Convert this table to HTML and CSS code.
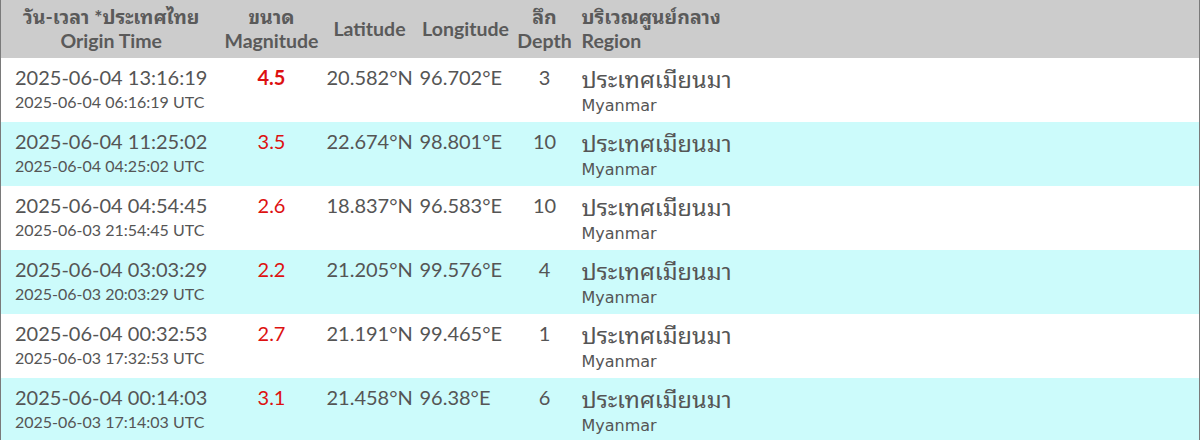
FILE: index.html
```html
<!DOCTYPE html>
<html lang="th">
<head>
<meta charset="utf-8">
<link rel="stylesheet" href="styles.css">
</head>
<body>
<table class="quakes">
  <colgroup>
    <col class="c-time"><col class="c-mag"><col class="c-lat"><col class="c-lon"><col class="c-dep"><col class="c-reg">
  </colgroup>
  <thead>
    <tr>
      <th class="h-center">วัน-เวลา *ประเทศไทย<br>Origin Time</th>
      <th class="h-center">ขนาด<br>Magnitude</th>
      <th class="h-center">Latitude</th>
      <th class="h-center">Longitude</th>
      <th class="h-center">ลึก<br>Depth</th>
      <th class="h-left">บริเวณศูนย์กลาง<br>Region</th>
    </tr>
  </thead>
  <tbody>
    <tr>
      <td class="time"><div class="main">2025-06-04 13:16:19</div><div class="sub">2025-06-04 06:16:19 UTC</div></td>
      <td class="mag strong">4.5</td>
      <td class="lat">20.582°N</td>
      <td class="lon">96.702°E</td>
      <td class="dep">3</td>
      <td class="reg"><div class="th">ประเทศเมียนมา</div><div class="en">Myanmar</div></td>
    </tr>
    <tr class="alt">
      <td class="time"><div class="main">2025-06-04 11:25:02</div><div class="sub">2025-06-04 04:25:02 UTC</div></td>
      <td class="mag">3.5</td>
      <td class="lat">22.674°N</td>
      <td class="lon">98.801°E</td>
      <td class="dep">10</td>
      <td class="reg"><div class="th">ประเทศเมียนมา</div><div class="en">Myanmar</div></td>
    </tr>
    <tr>
      <td class="time"><div class="main">2025-06-04 04:54:45</div><div class="sub">2025-06-03 21:54:45 UTC</div></td>
      <td class="mag">2.6</td>
      <td class="lat">18.837°N</td>
      <td class="lon">96.583°E</td>
      <td class="dep">10</td>
      <td class="reg"><div class="th">ประเทศเมียนมา</div><div class="en">Myanmar</div></td>
    </tr>
    <tr class="alt">
      <td class="time"><div class="main">2025-06-04 03:03:29</div><div class="sub">2025-06-03 20:03:29 UTC</div></td>
      <td class="mag">2.2</td>
      <td class="lat">21.205°N</td>
      <td class="lon">99.576°E</td>
      <td class="dep">4</td>
      <td class="reg"><div class="th">ประเทศเมียนมา</div><div class="en">Myanmar</div></td>
    </tr>
    <tr>
      <td class="time"><div class="main">2025-06-04 00:32:53</div><div class="sub">2025-06-03 17:32:53 UTC</div></td>
      <td class="mag">2.7</td>
      <td class="lat">21.191°N</td>
      <td class="lon">99.465°E</td>
      <td class="dep">1</td>
      <td class="reg"><div class="th">ประเทศเมียนมา</div><div class="en">Myanmar</div></td>
    </tr>
    <tr class="alt">
      <td class="time"><div class="main">2025-06-04 00:14:03</div><div class="sub">2025-06-03 17:14:03 UTC</div></td>
      <td class="mag">3.1</td>
      <td class="lat">21.458°N</td>
      <td class="lon">96.38°E</td>
      <td class="dep">6</td>
      <td class="reg"><div class="th">ประเทศเมียนมา</div><div class="en">Myanmar</div></td>
    </tr>
  </tbody>
</table>
</body>
</html>
```

FILE: styles.css
```css
html, body {
  margin: 0;
  padding: 0;
  background: #ffffff;
}

.quakes {
  width: 1200px;
  border-collapse: collapse;
  table-layout: fixed;
  border-left: 1px solid #7a7a7a;
  border-right: 1px solid #7a7a7a;
  font-family: "Lato", "Noto Sans Thai Looped", "Noto Serif Thai", "Noto Sans Thai", "Noto Sans", sans-serif;
  color: #555555;
}

.c-time { width: 221px; }
.c-mag { width: 100px; }
.c-lat { width: 96px; }
.c-lon { width: 96px; }
.c-dep { width: 62px; }
.c-reg { width: auto; }

thead tr {
  background: #cccccc;
  height: 58px;
}

th {
  padding: 0;
  font-size: 19.5px;
  font-weight: 700;
  line-height: 24px;
  color: #5a5a5a;
  vertical-align: middle;
  white-space: nowrap;
}

.h-center { text-align: center; }
.h-left { text-align: left; padding-left: 6px; }

tbody tr {
  height: 64px;
  background: #ffffff;
}

tbody tr.alt {
  background: #ccfbfb;
}

td {
  padding: 0;
  vertical-align: top;
  font-size: 20px;
  line-height: 24px;
}

.time { padding: 7px 0 0 14px; }
.time .main { font-size: 20px; line-height: 24px; }
.time .sub { font-size: 16px; line-height: 26px; }

.mag {
  padding-top: 7px;
  text-align: center;
  color: #dd1111;
}
.mag.strong { font-weight: 700; }

.lat { padding: 7px 0 0 5px; }
.lon { padding: 7px 0 0 2px; }
.dep { padding-top: 7px; text-align: center; }

.reg {
  padding: 8px 0 0 6px;
  font-family: "DejaVu Sans", "Noto Sans Thai Looped", "Noto Serif Thai", "Noto Sans Thai", sans-serif;
}
.reg .th { font-size: 23.5px; line-height: 28px; }
.reg .en { font-size: 16px; line-height: 24px; }
```
